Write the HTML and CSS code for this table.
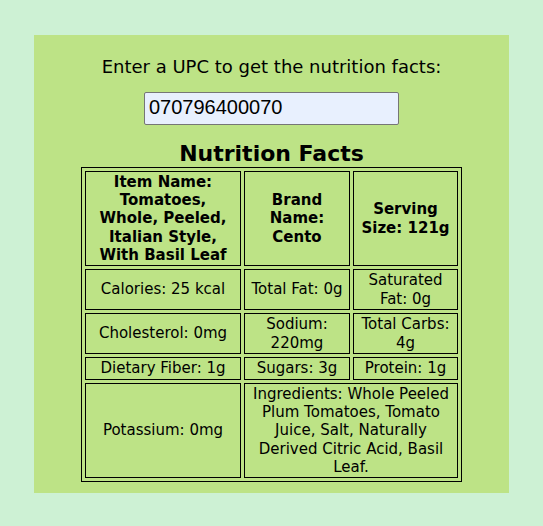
FILE: index.html
```html
<!DOCTYPE html>
<html lang="en">
<head>
<meta charset="utf-8">
<title>Nutrition Facts</title>
<link rel="stylesheet" href="styles.css">
</head>
<body>
<div class="panel">
  <p class="prompt">Enter a UPC to get the nutrition facts:</p>
  <input class="upc" type="text" value="070796400070">
  <h2 class="title">Nutrition Facts</h2>
  <table class="facts">
    <tr class="row-head">
      <th class="c1">Item Name: Tomatoes, Whole, Peeled, Italian Style, With Basil Leaf</th>
      <th class="c2">Brand Name: Cento</th>
      <th class="c3">Serving Size: 121g</th>
    </tr>
    <tr class="row-two">
      <td>Calories: 25 kcal</td>
      <td>Total Fat: 0g</td>
      <td>Saturated Fat: 0g</td>
    </tr>
    <tr class="row-two">
      <td>Cholesterol: 0mg</td>
      <td>Sodium: 220mg</td>
      <td>Total Carbs: 4g</td>
    </tr>
    <tr class="row-one">
      <td>Dietary Fiber: 1g</td>
      <td>Sugars: 3g</td>
      <td>Protein: 1g</td>
    </tr>
    <tr class="row-last">
      <td>Potassium: 0mg</td>
      <td colspan="2">Ingredients: Whole Peeled Plum Tomatoes, Tomato Juice, Salt, Naturally Derived Citric Acid, Basil Leaf.</td>
    </tr>
  </table>
</div>
</body>
</html>
```
FILE: styles.css
```css
html, body {
  background: #cdf1d4;
}
body {
  margin: 8px;
  font-family: "DejaVu Sans", Verdana, sans-serif;
  color: #000;
}
.panel {
  width: 475px;
  margin: 27px auto 0;
  padding: 21px 0 11px;
  background: #bde386;
  text-align: center;
  box-sizing: border-box;
}
.prompt {
  margin: 0;
  font-size: 18px;
  line-height: 21px;
}
.upc {
  display: block;
  box-sizing: border-box;
  width: 255px;
  height: 33px;
  margin: 15px auto 0;
  padding: 0 4px 3px;
  border: 1px solid #767676;
  border-radius: 2px;
  background: #e8f0fe;
  font-family: "Liberation Sans", Arial, sans-serif;
  font-size: 20px;
  color: #000;
  outline: none;
}
.title {
  margin: 16px 0 0;
  font-size: 22px;
  line-height: 26px;
  font-weight: bold;
}
.facts {
  margin: 0 auto;
  border: 1px solid #000;
  border-spacing: 3px;
  font-size: 15px;
  line-height: 18.2px;
}
.facts th,
.facts td {
  border: 1px solid #000;
  padding: 1px 2px;
  text-align: center;
  vertical-align: middle;
  box-sizing: border-box;
}
.facts th {
  font-weight: bold;
}
.facts th.c1 {
  padding: 1px 12px;
}
.row-head { height: 94px; }
.row-two { height: 41px; }
.row-one { height: 23px; }
.row-last { height: 95px; }
.c1 { width: 156px; }
.c2 { width: 106px; }
.c3 { width: 105px; }
```
